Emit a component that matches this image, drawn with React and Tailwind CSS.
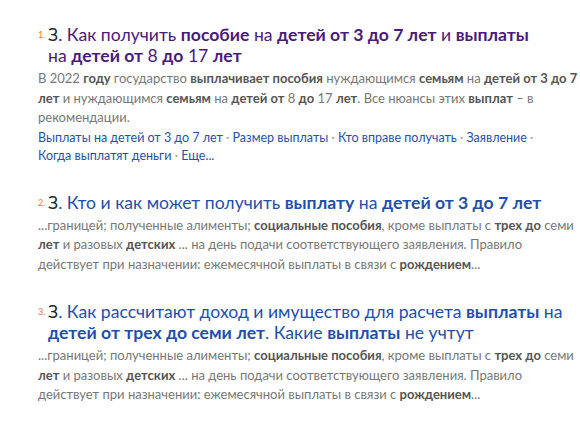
import React from 'react';

const B = ({ children }) => <b className="font-bold">{children}</b>;
const S = ({ children }) => <b className="font-bold text-[#555]">{children}</b>;

const Result = ({ n, visited, title, snippet, links, className = '' }) => (
  <div className={`pl-[38px] ${className}`}>
    <h3
      className={`relative pl-[10px] whitespace-nowrap text-[17.6px] leading-[21px] font-normal ${
        visited ? 'text-[#4a1a7d]' : 'text-[#1f4fae]'
      }`}
    >
      <span className="absolute left-0 top-[6px] text-[9px] leading-[10px] text-[#ef7a2e]">{n}.</span>
      <span className="text-[#222]">З</span>
      {title}
    </h3>
    <div className="mt-[3px] whitespace-nowrap text-[13px] leading-[19.5px] text-[#777]">{snippet}</div>
    {links && (
      <div className="mt-[1px] whitespace-nowrap text-[12.5px] leading-[18px] text-[#2452a8]">{links}</div>
    )}
  </div>
);

const Dot = () => <span className="text-[#999]"> · </span>;

const snippet2 = (
  <>
    ...границей; полученные алименты; <S>социальные пособия</S>, кроме выплаты с <S>трех до</S> семи
    <br />
    <S>лет</S> и разовых <S>детских</S> ... на день подачи соответствующего заявления. Правило
    <br />
    действует при назначении: ежемесячной выплаты в связи с <S>рождением</S>...
  </>
);

export default function App() {
  return (
    <div className="w-[580px] h-[422px] bg-white overflow-hidden pt-[24px] font-['Lato',sans-serif]">
      <Result
        n={1}
        visited
        title={
          <>
            . Как получить <B>пособие</B> на <B>детей от 3 до 7 лет</B> и <B>выплаты</B>
            <br />
            на <B>детей от</B> 8 <B>до</B> 17 <B>лет</B>
          </>
        }
        snippet={
          <>
            В 2022 <S>году</S> государство <S>выплачивает пособия</S> нуждающимся <S>семьям</S> на{' '}
            <S>детей от 3 до 7</S>
            <br />
            <S>лет</S> и нуждающимся <S>семьям</S> на <S>детей от</S> 8 <S>до</S> 17 <S>лет</S>. Все нюансы
            этих <S>выплат</S> – в
            <br />
            рекомендации.
          </>
        }
        links={
          <>
            Выплаты на детей от 3 до 7 лет
            <Dot />
            Размер выплаты
            <Dot />
            Кто вправе получать
            <Dot />
            Заявление
            <Dot />
            <br />
            Когда выплатят деньги
            <Dot />
            Еще...
          </>
        }
      />
      <Result
        n={2}
        className="mt-[27px]"
        title={
          <>
            . Кто и как может получить <B>выплату</B> на <B>детей от 3 до 7 лет</B>
          </>
        }
        snippet={snippet2}
      />
      <Result
        n={3}
        className="mt-[27px]"
        title={
          <>
            . Как рассчитают доход и имущество для расчета <B>выплаты</B> на
            <br />
            <B>детей от трех до семи лет</B>. Какие <B>выплаты</B> не учтут
          </>
        }
        snippet={snippet2}
      />
    </div>
  );
}
